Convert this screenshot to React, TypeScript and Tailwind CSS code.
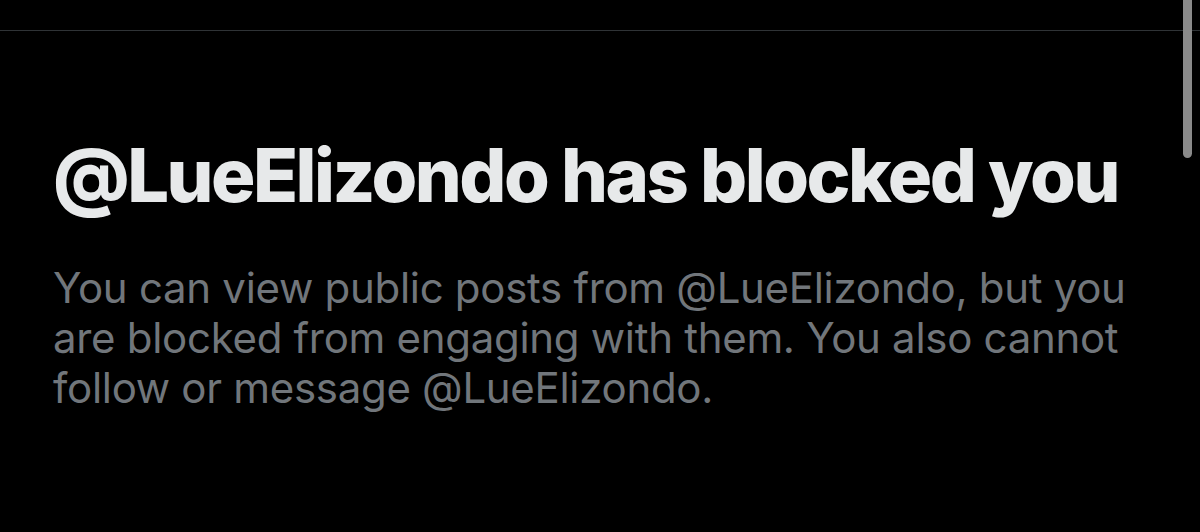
export default function App() {
  return (
    <div className="relative h-[532px] w-[1200px] overflow-hidden bg-black" style={{ fontFamily: "Inter, 'Noto Sans', sans-serif" }}>
      <div className="h-[31px] border-b border-[#2f3336]" />
      <div className="absolute right-[8px] top-0 h-[158px] w-[9px] rounded-b-full bg-[#8a8a8a]" />
      <div className="pl-[53px] pr-[50px] pt-[104px]">
        <h1 className="text-[74px] font-extrabold leading-[80px] tracking-[-2.5px] text-[#e7e9ea]">
          @LueElizondo has blocked you
        </h1>
        <p className="mt-[48px] text-[42px] leading-[50px] tracking-[-0.3px] text-[#71767b]">
          You can view public posts from @LueElizondo, but you are blocked from engaging with them. You also cannot
          follow or message @LueElizondo.
        </p>
      </div>
    </div>
  );
}
